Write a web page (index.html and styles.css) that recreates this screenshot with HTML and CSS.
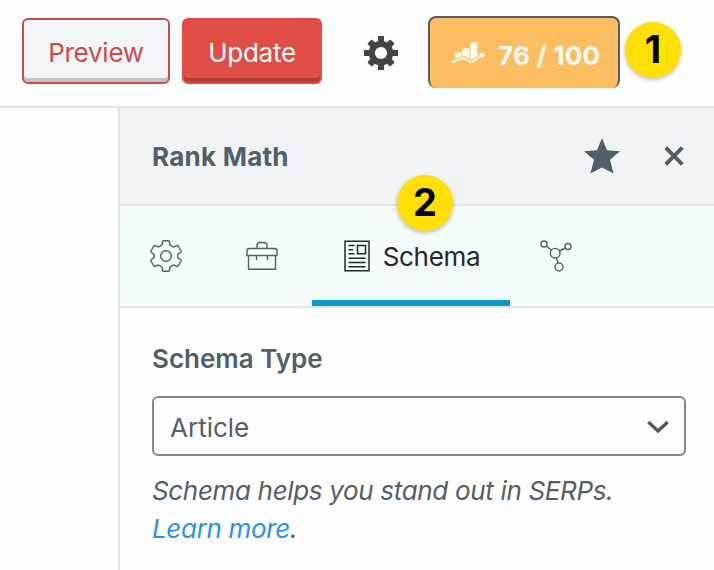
FILE: index.html
```html
<!DOCTYPE html>
<html lang="en">
<head>
    <meta charset="UTF-8">
    <meta name="viewport" content="width=device-width, initial-scale=1.0">
    <title>Rank Math - Schema</title>
    <link rel="stylesheet" href="styles.css">
</head>
<body>
    <header class="toolbar">
        <button type="button" class="btn btn-preview">Preview</button>
        <button type="button" class="btn btn-update">Update</button>
        <button type="button" class="icon-btn settings" aria-label="Settings">
            <svg width="34" height="34" viewBox="-17 -17 34 34">
                <g fill="#3e4649">
                    <rect x="-3" y="-17" width="6" height="34"/>
                    <rect x="-17" y="-3" width="34" height="6"/>
                    <rect x="-3.2" y="-16.2" width="6.4" height="32.4" rx="1" transform="rotate(45)"/>
                    <rect x="-3.2" y="-16.2" width="6.4" height="32.4" rx="1" transform="rotate(-45)"/>
                    <circle r="12.3"/>
                </g>
                <circle r="6.1" fill="#fdfefe"/>
            </svg>
        </button>
        <button type="button" class="score">
            <svg width="34" height="24" viewBox="0 0 34 24">
                <path fill="#fffdf0" d="M4 11.500h6.500v4L4 18zM11.500 7.500h7v10.300l-5-2.800-2 .5zM19.500 1.500h7v13.300l-6 4-1-.5z"/>
                <path fill="none" stroke="#fffdf0" stroke-width="1.900" d="M.5 21.300 12.500 17l8.200 4.300L31 13.800"/>
                <path fill="#fffdf0" d="m27.500 12.700 6.500-1.200-2.300 6z"/>
            </svg>
            <span class="score-text">76 / 100</span>
        </button>
        <span class="badge badge-score">1</span>
    </header>

    <aside class="sidebar">
        <div class="sidebar-header">
            <h2>Rank Math</h2>
            <button type="button" class="icon-btn star" aria-label="Unpin">
                <svg width="36" height="36" viewBox="0 0 36 36">
                    <path fill="#515f68" d="M18 0l5 12.300 13 .9-10 8.500L29.600 35.500 18 29.500 6.400 35.500 10 21.700 0 13.200l13-.9z"/>
                </svg>
            </button>
            <button type="button" class="icon-btn" aria-label="Close">
                <svg width="20" height="20" viewBox="0 0 20 20">
                    <path stroke="#515f68" stroke-width="3.800" d="M1.700 1.700l16.600 16.600M18.300 1.700 1.700 18.300"/>
                </svg>
            </button>
        </div>

        <nav class="tabs">
            <span class="badge badge-tab">2</span>
            <a class="tab tab-general">
                <svg width="32" height="32" viewBox="-16 -16 32 32" fill="none" stroke="#555d66" stroke-width="1.400" stroke-linejoin="round">
                    <path d="M-3.600-14.200Q-3.400-15.200-2.400-15.200H2.400Q3.400-15.200 3.600-14.200V-11.500Q5.700-9.500 8-9L10.500-10.300Q11.500-10.700 12.200-9.800L15-5Q15.400-4.100 14.600-3.500L12-1.800Q11.500 0 12 1.800L14.600 3.500Q15.400 4.100 15 5L12.200 9.800Q11.500 10.700 10.500 10.300L8 9Q5.700 9.500 3.600 11.500V14.200Q3.400 15.200 2.400 15.200H-2.400Q-3.400 15.200-3.600 14.200V11.500Q-5.700 9.500-8 9L-10.500 10.300Q-11.500 10.700-12.200 9.800L-15 5Q-15.400 4.100-14.600 3.500L-12 1.800Q-11.500 0-12-1.800L-14.600-3.500Q-15.400-4.100-15-5L-12.200-9.800Q-11.500-10.700-10.500-10.300L-8-9Q-5.700-9.500-3.600-11.500Z"/>
                    <circle r="5.300"/>
                </svg>
            </a>
            <a class="tab tab-advanced">
                <svg width="32" height="30" viewBox="0 0 32 30" fill="none" stroke="#555d66" stroke-width="1.400">
                    <path d="M2.500 14.500V28.300H29.500V14.500M3.500 7.500H28.500Q31 7.500 31 10V14.500H1V10Q1 7.500 3.500 7.500ZM11 7.500V4.500Q11 1.500 14 1.500H18Q21 1.500 21 4.500V7.500M10.500 14.500v4.500M21.500 14.500v4.500"/>
                </svg>
            </a>
            <a class="tab tab-schema active">
                <svg width="26" height="32" viewBox="0 0 26 32" fill="none" stroke="#23282d" stroke-width="1.500">
                    <path d="M1 1.200H25V30.800H1ZM13.500 5.500H21.500V13.800H13.500ZM4.500 5.500h6M4.500 9.700h4.500M4.500 13.800h6M4.500 18.300h17M4.500 22.500h17M4.500 26.800h17"/>
                </svg>
                <span>Schema</span>
            </a>
            <a class="tab tab-social">
                <svg width="32" height="32" viewBox="0 0 32 32" fill="none" stroke="#555d66" stroke-width="1.400">
                    <circle cx="4" cy="4" r="3"/>
                    <circle cx="28" cy="6.500" r="3"/>
                    <circle cx="15.200" cy="13.200" r="4.800"/>
                    <circle cx="19" cy="27" r="4"/>
                    <path d="M6.200 6l5.300 4M25.300 8l-6 3M16.400 18l1.600 5"/>
                </svg>
            </a>
        </nav>

        <div class="panel">
            <label class="field-label" for="schema-type">Schema Type</label>
            <div class="select" id="schema-type" role="combobox" tabindex="0">
                <span>Article</span>
                <svg width="22" height="14" viewBox="0 0 22 14">
                    <path fill="none" stroke="#50575c" stroke-width="3.200" d="M1.300 2 11 11 20.700 2"/>
                </svg>
            </div>
            <p class="help">Schema helps you stand out in SERPs.<br><a href="#">Learn more</a>.</p>
        </div>
    </aside>
</body>
</html>
```

FILE: styles.css
```css
* {
    box-sizing: border-box;
}
body {
    margin: 0;
    height: 570px;
    display: flex;
    flex-direction: column;
    overflow: hidden;
    background: #fdfefe;
    font-family: Inter, "Liberation Sans", sans-serif;
    font-size: 26px;
    color: #555d66;
}
button {
    font: inherit;
    padding: 0;
    border: none;
    background: none;
}
svg {
    display: block;
    flex: none;
}

/* Top bar */
.toolbar {
    position: relative;
    flex: none;
    display: flex;
    align-items: flex-start;
    height: 108px;
    padding: 16px 0 0 22px;
    border-bottom: 2px solid #dfe4e7;
}
.btn {
    height: 66px;
    margin-top: 2px;
    padding-top: 3px;
    border: 2px solid #cb4b48;
    border-radius: 6px;
    letter-spacing: -0.25px;
}
.btn-preview {
    width: 148px;
    background: #f1f5f8;
    color: #cb4b48;
    box-shadow: inset 0 -4px 0 #bfc3c7;
}
.btn-update {
    width: 140px;
    margin-left: 12px;
    background: #df4d45;
    border-color: #df4d45;
    color: #fff;
    box-shadow: inset 0 -4px 0 #b23c34;
}
.settings {
    margin: 20px 0 0 42px;
}
.score {
    display: flex;
    align-items: center;
    gap: 13px;
    width: 192px;
    height: 72px;
    margin-left: 30px;
    padding: 4px 0 0 21px;
    border: 2px solid #535d67;
    border-bottom: none;
    border-radius: 8px;
    background: #fdbd61;
    color: #fffdf5;
    font-weight: 700;
    letter-spacing: 0.25px;
}
.score svg {
    margin-bottom: 5px;
}
.badge {
    position: absolute;
    width: 56px;
    height: 56px;
    border-radius: 50%;
    background: #ffe000;
    box-shadow: 0 2px 4px rgba(0, 0, 0, 0.25);
    color: #000;
    font-size: 38px;
    font-weight: 700;
    line-height: 54px;
    text-align: center;
}
.badge-score {
    left: 625px;
    top: 22px;
}

/* Sidebar */
.sidebar {
    flex: 1;
    margin-left: 118px;
    border-left: 2px solid #dfe4e7;
}
.sidebar-header {
    display: flex;
    align-items: center;
    height: 98px;
    padding: 0 30px 0 32px;
    background: #f0f4f7;
    border-bottom: 2px solid #dfe4e7;
}
.sidebar-header h2 {
    margin: 0 auto 0 0;
    font-size: 26px;
    font-weight: 700;
    letter-spacing: 0.25px;
    color: #515f68;
}
.star {
    margin-right: 44px;
}
.tabs {
    position: relative;
    display: flex;
    height: 102px;
    background: #f3fbfb;
    border-bottom: 2px solid #dfe4e7;
}
.badge-tab {
    left: 277px;
    top: -31px;
}
.tab {
    display: flex;
    align-items: center;
    justify-content: center;
    border-bottom: 6px solid transparent;
    padding-top: 6px;
}
.tab-general {
    width: 91px;
}
.tab-advanced {
    width: 101px;
}
.tab-schema {
    width: 198px;
    padding-left: 2px;
    gap: 13px;
    letter-spacing: -0.3px;
    color: #23282d;
}
.tab-social {
    width: 91px;
}
.tab.active {
    border-bottom-color: #0b97d2;
}
.panel {
    padding: 35px 28px 0 32px;
}
.field-label {
    display: block;
    font-weight: 600;
    line-height: 32px;
    color: #515f68;
}
.select {
    display: flex;
    align-items: center;
    justify-content: space-between;
    height: 60px;
    margin-top: 21px;
    padding: 2px 15px 0 16px;
    border: 2px solid #7e8993;
    border-radius: 6px;
}
.help {
    margin: 16px 0 0;
    font-style: italic;
    line-height: 38px;
    letter-spacing: -0.33px;
    white-space: nowrap;
}
.help a {
    color: #2c91ea;
    text-decoration: none;
}
```
